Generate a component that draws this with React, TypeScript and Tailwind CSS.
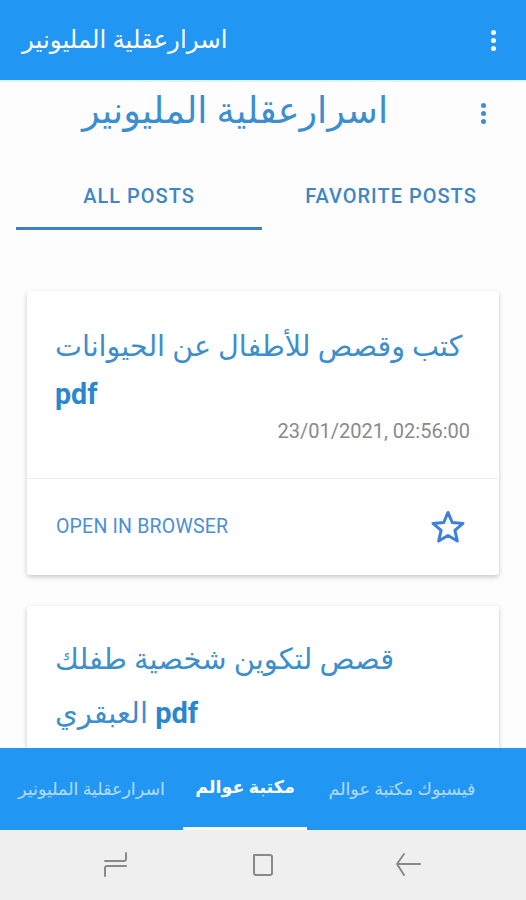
import React from "react";

const font = { fontFamily: 'Roboto, "DejaVu Sans", sans-serif' };

function Dots({ color }: { color: string }) {
  return (
    <div className="flex flex-col items-center gap-[3px]">
      <span className={`block w-[5px] h-[5px] rounded-full ${color}`} />
      <span className={`block w-[5px] h-[5px] rounded-full ${color}`} />
      <span className={`block w-[5px] h-[5px] rounded-full ${color}`} />
    </div>
  );
}

function StarOutline() {
  return (
    <svg width="38" height="36" viewBox="0 0 24 23" fill="none">
      <path
        d="M12 2.2 L14.7 8.6 L21.6 9.2 L16.4 13.7 L18 20.5 L12 16.9 L6 20.5 L7.6 13.7 L2.4 9.2 L9.3 8.6 Z"
        stroke="#3f7fdc"
        strokeWidth="1.9"
        strokeLinejoin="round"
      />
    </svg>
  );
}

function Card({ children, footer }: { children: React.ReactNode; footer?: boolean }) {
  return (
    <div className="bg-white rounded-[3px] shadow-[0_2px_5px_rgba(0,0,0,0.22)]">
      {children}
      {footer && (
        <div className="border-t border-[#eeeeee] h-[97px] flex items-center justify-between pl-[29px] pr-[32px]">
          <span className="text-[19.5px] text-[#4a8fd6] tracking-[0.2px]">OPEN IN BROWSER</span>
          <StarOutline />
        </div>
      )}
    </div>
  );
}

export default function App() {
  return (
    <div className="w-[526px] h-[900px] flex flex-col bg-white overflow-hidden" style={font}>
      {/* App bar */}
      <div className="h-[80px] shrink-0 bg-[#2196f3] flex items-center justify-between pl-[22px] pr-[30px]">
        <span className="text-white text-[24.5px]" dir="rtl">اسرارعقلية المليونير</span>
        <Dots color="bg-white" />
      </div>
      <div className="h-[2px] bg-[#e3f0fb] shrink-0" />

      {/* Content */}
      <div className="flex-1 overflow-hidden bg-[#fdfdfd]">
        <div className="h-[58px] flex items-center relative">
          <div className="w-[470px] text-center text-[36.5px] text-[#3b8ed0]" dir="rtl">
            اسرارعقلية المليونير
          </div>
          <div className="absolute right-[40px] top-[21px]">
            <Dots color="bg-[#3b8ed0]" />
          </div>
        </div>

        {/* Tabs */}
        <div className="flex mt-[41px] px-[16px]">
          <div className="w-[246px] flex flex-col items-center">
            <span className="text-[20px] tracking-[1px] font-medium text-[#3f86c4] h-[30px] leading-[30px]">ALL POSTS</span>
            <div className="mt-[16px] w-full h-[3px] bg-[#3f7fbc]" />
          </div>
          <div className="flex-1 flex flex-col items-center">
            <span className="text-[20px] tracking-[1px] font-medium text-[#3f86c4] h-[30px] leading-[30px] pl-[10px]">FAVORITE POSTS</span>
          </div>
        </div>

        <div className="px-[27px] pt-[61px] flex flex-col gap-[31px]">
          <Card footer>
            <div className="pl-[28px] pr-[28px] pt-[31px] pb-[32px]">
              <div dir="rtl" className="text-left text-[28.6px] leading-[48px] text-[#3d8fcc]">
                كتب وقصص للأطفال عن الحيوانات <span className="font-bold text-[#2a86cf]">pdf</span>
              </div>
              <div className="text-right text-[20px] text-[#8a8a8a] -mt-[2px] pr-[1px]">23/01/2021, 02:56:00</div>
            </div>
          </Card>
          <Card>
            <div className="pl-[28px] pr-[28px] pt-[26px] pb-[40px]">
              <div dir="rtl" className="text-left text-[29px] leading-[54px] text-[#3d8fcc] pl-[0px] pr-[60px]">
                قصص لتكوين شخصية طفلك <span className="font-bold text-[#2a86cf]">pdf</span> العبقري
              </div>
            </div>
          </Card>
        </div>
      </div>

      {/* Bottom tabs */}
      <div className="h-[82px] shrink-0 bg-[#2196f3] flex items-stretch text-[17.5px]">
        <div className="w-[183px] flex items-center justify-center text-white/65" dir="rtl">اسرارعقلية المليونير</div>
        <div className="w-[124px] flex flex-col">
          <div className="flex-1 flex items-center justify-center text-white font-bold" dir="rtl">مكتبة عوالم</div>
          <div className="h-[3px] bg-white" />
        </div>
        <div className="w-[190px] flex items-center justify-center text-white/65" dir="rtl">فيسبوك مكتبة عوالم</div>
      </div>

      {/* System nav */}
      <div className="h-[70px] shrink-0 bg-[#efefef] flex items-center justify-between pl-[101px] pr-[104px]">
        <svg width="28" height="30" viewBox="0 0 28 30" fill="none" stroke="#8a8a8a" strokeWidth="2" strokeLinecap="round" strokeLinejoin="round">
          <path d="M25 3 V9 Q25 11 23 11 H4" />
          <path d="M25 16 H6 Q4 16 4 18 V26" />
        </svg>
        <svg width="26" height="28" viewBox="0 0 26 28" fill="none" stroke="#8a8a8a" strokeWidth="2" strokeLinecap="round" strokeLinejoin="round">
          <path d="M5 4 H21 Q23 4 23 6 V22 Q23 24 21 24 H7 Q5 24 5 22 Z" />
        </svg>
        <svg width="28" height="30" viewBox="0 0 28 30" fill="none" stroke="#8a8a8a" strokeWidth="2" strokeLinecap="round" strokeLinejoin="round">
          <path d="M10 4 L3 14 L10 25" />
          <path d="M4 14 H26" />
        </svg>
      </div>
    </div>
  );
}
